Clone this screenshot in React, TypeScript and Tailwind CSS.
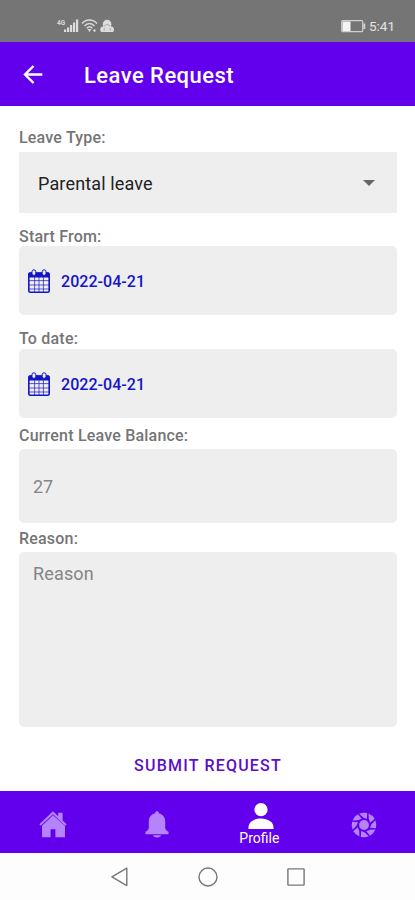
import type { ReactNode } from "react";

const calendarColumns = [6.6, 11, 15.4];
const calendarRows = [11.6, 16, 20];
const blades = [0, 45, 90, 135, 180, 225, 270, 315];

function SignalIcons() {
  return (
    <svg width="58" height="16" viewBox="0 0 58 16" fill="#dcdcdc">
      <text x="0" y="7" fontSize="6.5" fontWeight="700" fontFamily="Roboto, sans-serif">
        4G
      </text>
      <rect x="7" y="11.5" width="2.2" height="2.5" />
      <rect x="10" y="9.5" width="2.2" height="4.5" />
      <rect x="13" y="7" width="2.2" height="7" />
      <rect x="16" y="4.5" width="2.2" height="9.5" />
      <rect x="19" y="1.5" width="2.2" height="12.5" />
      <g fill="none" stroke="#dcdcdc" strokeWidth="1.5">
        <path d="M25 5.5C29 .8 36 .8 40 5.5" />
        <path d="M27.5 8c3-3.5 7-3.5 10 0" />
        <path d="M29.7 10.3c2-2 3.8-2 5.6 0" />
      </g>
      <path d="M30.5 11h4L32.5 14z" />
      <circle cx="37.5" cy="12.5" r="1.2" />
      <path d="M45.8 6a4.3 4.3 0 0 1 8.6 0c0 1-.2 1.6-.6 2.3 2 .3 3.2 1.5 3.2 3.4 0 1.5-.8 2.3-2 2.3h-9.8c-1.2 0-2-.8-2-2.3 0-1.9 1.2-3.1 3.2-3.4-.4-.7-.6-1.3-.6-2.3z" />
      <path
        d="M47.2 8l3-1.8 3 1.8M47.2 12.5V10M53.2 12.5V10"
        fill="none"
        stroke="#8a8a8a"
        strokeWidth=".7"
      />
    </svg>
  );
}

function StatusBar() {
  return (
    <div className="flex h-[42px] items-center justify-between bg-[#757575] pt-[10px] pr-5 pl-[57px]">
      <SignalIcons />
      <div className="flex items-center gap-[3px] text-[#e4e4e4]">
        <svg width="25" height="13" viewBox="0 0 25 13" fill="none">
          <rect x=".7" y=".7" width="21" height="11" rx="1" stroke="#cfcfcf" strokeWidth="1.2" />
          <rect x="1.5" y="1.5" width="8" height="9.5" fill="#f5f5f5" />
          <rect x="22.3" y="3.5" width="2" height="5.5" fill="#cfcfcf" />
        </svg>
        <span className="text-[13.5px] leading-4">5:41</span>
      </div>
    </div>
  );
}

function Header() {
  return (
    <header className="flex h-16 items-center bg-[#6200ee] pl-[21px] text-white">
      <svg
        width="24"
        height="24"
        viewBox="0 0 24 24"
        fill="none"
        stroke="currentColor"
        strokeWidth="2.4"
      >
        <path d="M21.3 12.5H4.5M12.5 4l-8.5 8.5 8.5 8.5" />
      </svg>
      <h1 className="ml-[39px] pt-[3px] text-[22px] leading-7 font-medium tracking-[0.45px]">
        Leave Request
      </h1>
    </header>
  );
}

function CalendarIcon() {
  return (
    <svg width="22" height="24" viewBox="0 0 22 24" fill="none" stroke="#1414c8">
      <rect x=".8" y="4" width="20.4" height="19.2" rx="1.5" strokeWidth="1.6" />
      <path d="M1 4h20v4H1z" fill="#1414c8" />
      {calendarColumns.map((x) => (
        <path key={x} d={`M${x} 8v15`} strokeWidth=".7" />
      ))}
      {calendarRows.map((y) => (
        <path key={y} d={`M1 ${y}h20`} strokeWidth=".7" />
      ))}
      <rect x="4" y=".8" width="3.8" height="5.6" rx="1.9" fill="#eee" strokeWidth="1" />
      <rect x="14.2" y=".8" width="3.8" height="5.6" rx="1.9" fill="#eee" strokeWidth="1" />
    </svg>
  );
}

function Label({ children }: { children: ReactNode }) {
  return (
    <div className="h-5 pt-px text-[16px] leading-5 font-medium tracking-[0.2px] text-[#757575]">
      {children}
    </div>
  );
}

function DateField({ value }: { value: string }) {
  return (
    <div className="flex h-[69px] items-center rounded-[5px] bg-[#eee] pl-[9px]">
      <CalendarIcon />
      <span className="ml-[11px] pt-[3px] text-[16px] leading-5 font-medium tracking-[0.05px] text-[#1414c8]">
        {value}
      </span>
    </div>
  );
}

function HomeIcon() {
  return (
    <svg width="28" height="27" viewBox="0 0 28 27" fill="#b583fb">
      <path d="M14 .2.4 13.3l1.3 1.4L14 3.2l12.3 11.5 1.3-1.4-4-3.9V1.8h-4.4v3.5z" />
      <path d="M14 4.3 3 14.7v11.5h8.6v-7.900h4.800v7.900H26V14.700z" />
    </svg>
  );
}

function BellIcon() {
  return (
    <svg width="24" height="27" viewBox="0 0 24 27" fill="#b583fb">
      <path d="M10.2 2.2C10.2 1 11 0 12 0s1.8 1 1.8 2.2c4 1 6.4 4 6.4 8.3v6.3c0 1.7 1.3 3 3.3 4v2.4H.5v-2.4c2-1 3.3-2.3 3.3-4v-6.3c0-4.3 2.4-7.3 6.4-8.3z" />
      <path d="M8 24.3h8c-.4 1.4-2 2.2-4 2.2s-3.6-.8-4-2.2z" />
    </svg>
  );
}

function ProfileIcon() {
  return (
    <svg width="26" height="26" viewBox="0 0 26 26" fill="#fff">
      <circle cx="13" cy="6.7" r="6.6" />
      <path d="M.5 26v-1.7C.5 19 6 15.5 13 15.5S25.500 19 25.500 24.300V26z" />
    </svg>
  );
}

function ApertureIcon() {
  return (
    <svg width="26" height="26" viewBox="-13 -13 26 26" fill="#b583fb">
      <circle r="4.9" />
      {blades.map((angle) => (
        <path
          key={angle}
          d="M-4.800-11.300A12.300 12.300 0 0 1 3.200-11.900L2.800-6-.8-7.600z"
          transform={`rotate(${angle})`}
        />
      ))}
    </svg>
  );
}

function BottomNav() {
  return (
    <nav className="grid h-[62px] grid-cols-4 bg-[#6200ee] text-white">
      <div className="flex items-center justify-center pt-1 pl-[3px]">
        <HomeIcon />
      </div>
      <div className="flex items-center justify-center pt-1 pl-[3px]">
        <BellIcon />
      </div>
      <div className="flex flex-col items-center pt-3">
        <div className="pl-[3px]">
          <ProfileIcon />
        </div>
        <span className="mt-px text-[14px] leading-4">Profile</span>
      </div>
      <div className="flex items-center justify-center pt-[5px] pl-[2px]">
        <ApertureIcon />
      </div>
    </nav>
  );
}

function SystemNav() {
  return (
    <div className="flex h-[47px] items-center justify-center gap-[69px] bg-[#fdfdfd]">
      <svg width="18" height="20" viewBox="0 0 18 20" fill="none" stroke="#777" strokeWidth="1.4">
        <path d="M15.8 1.2v17.4L.9 9.9z" strokeLinejoin="round" />
      </svg>
      <svg width="20" height="20" viewBox="0 0 20 20" fill="none" stroke="#777" strokeWidth="1.4">
        <circle cx="10" cy="10" r="9" />
      </svg>
      <svg width="18" height="18" viewBox="0 0 18 18" fill="none" stroke="#777" strokeWidth="1.4">
        <rect x=".9" y=".9" width="16.2" height="16.2" rx=".5" />
      </svg>
    </div>
  );
}

export default function App() {
  return (
    <div className="flex h-[900px] w-[415px] flex-col overflow-hidden bg-white font-['Roboto',sans-serif]">
      <StatusBar />
      <Header />

      <main className="flex flex-1 flex-col pt-[21px] pr-[18px] pl-[19px]">
        <Label>Leave Type:</Label>
        <div className="mt-[5px] flex h-[61px] items-center justify-between bg-[#eee] pr-[22px] pl-[19px]">
          <span className="pt-[2px] text-[18px] leading-6 tracking-[0.15px] text-[#222]">
            Parental leave
          </span>
          <svg width="12" height="6" viewBox="0 0 12 6" fill="#666">
            <path d="M0 0h12L6 6z" />
          </svg>
        </div>

        <div className="mt-[13px]">
          <Label>Start From:</Label>
          <DateField value="2022-04-21" />
        </div>

        <div className="mt-[13px] flex flex-col gap-px">
          <Label>To date:</Label>
          <DateField value="2022-04-21" />
        </div>

        <div className="mt-[7px]">
          <Label>Current Leave Balance:</Label>
          <div className="mt-1 flex h-[74px] items-center rounded-[5px] bg-[#eee] pl-[14px] text-[18px] text-[#858585]">
            27
          </div>
        </div>

        <div className="mt-[5px]">
          <Label>Reason:</Label>
          <div className="mt-1 h-[175px] rounded-[5px] bg-[#eee] pt-[10px] pl-[14px] text-[18px] leading-6 tracking-[0.15px] text-[#858585]">
            Reason
          </div>
        </div>

        <button className="mt-[29px] text-[16px] leading-5 font-medium tracking-[1.2px] text-[#5a0fc8]">
          SUBMIT REQUEST
        </button>
      </main>

      <BottomNav />
      <SystemNav />
    </div>
  );
}
